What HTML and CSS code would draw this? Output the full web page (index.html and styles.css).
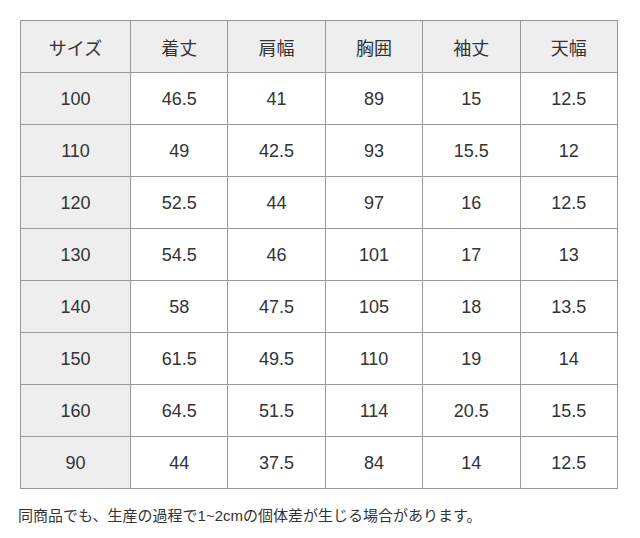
FILE: index.html
```html
<!DOCTYPE html>
<html lang="ja">
<head>
<meta charset="utf-8">
<link rel="stylesheet" href="styles.css">
</head>
<body>
<div class="wrap">
<table class="size-table">
  <colgroup>
    <col class="c-first"><col><col><col><col><col>
  </colgroup>
  <tr class="head"><th>サイズ</th><th>着丈</th><th>肩幅</th><th>胸囲</th><th>袖丈</th><th>天幅</th></tr>
  <tr><th>100</th><td>46.5</td><td>41</td><td>89</td><td>15</td><td>12.5</td></tr>
  <tr><th>110</th><td>49</td><td>42.5</td><td>93</td><td>15.5</td><td>12</td></tr>
  <tr><th>120</th><td>52.5</td><td>44</td><td>97</td><td>16</td><td>12.5</td></tr>
  <tr><th>130</th><td>54.5</td><td>46</td><td>101</td><td>17</td><td>13</td></tr>
  <tr><th>140</th><td>58</td><td>47.5</td><td>105</td><td>18</td><td>13.5</td></tr>
  <tr><th>150</th><td>61.5</td><td>49.5</td><td>110</td><td>19</td><td>14</td></tr>
  <tr><th>160</th><td>64.5</td><td>51.5</td><td>114</td><td>20.5</td><td>15.5</td></tr>
  <tr><th>90</th><td>44</td><td>37.5</td><td>84</td><td>14</td><td>12.5</td></tr>
</table>
<p class="note">同商品でも、生産の過程で1~2cmの個体差が生じる場合があります。</p>
</div>
</body>
</html>
```
FILE: styles.css
```css
html, body {
  margin: 0;
  padding: 0;
  background: #fff;
}
body {
  font-family: "Liberation Sans", "Noto Sans CJK JP", sans-serif;
  color: #333;
}
.wrap {
  padding: 20px 0 0 20px;
}
.size-table {
  border-collapse: collapse;
  width: 598px;
  table-layout: fixed;
  font-size: 18px;
}
.c-first {
  width: 110px;
}
.size-table th,
.size-table td {
  border: 1px solid #999;
  height: 49px;
  padding: 2px 0 0;
  text-align: center;
  vertical-align: middle;
  font-weight: normal;
}
.size-table .head th {
  height: 51px;
  padding: 0;
}
.size-table th {
  background: #eee;
}
.note {
  margin: 16px 0 0 -2px;
  font-size: 15px;
  line-height: 22px;
}
```
